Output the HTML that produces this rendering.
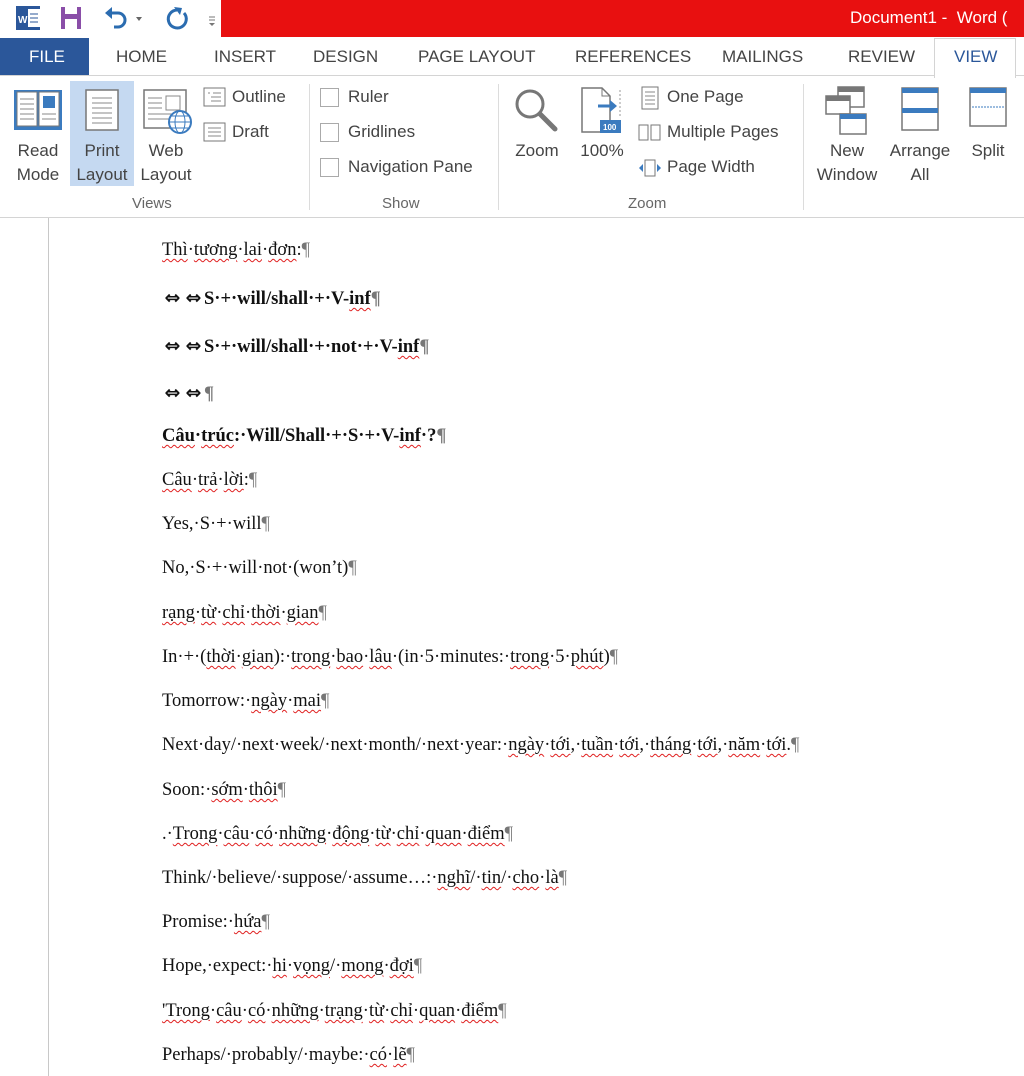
<!DOCTYPE html>
<html><head><meta charset="utf-8"><style>
*{margin:0;padding:0;box-sizing:border-box}
body{width:1024px;height:1076px;overflow:hidden;background:#fff;position:relative;font-family:"Segoe UI","Liberation Sans","DejaVu Sans",sans-serif;color:#444}
.a{position:absolute;white-space:nowrap}
.tab{position:absolute;top:47px;font-size:17px;color:#444}
.lbl{position:absolute;font-size:17px;color:#444;text-align:center;line-height:24px}
.grp{position:absolute;top:195px;font-size:15px;color:#666}
.sep{position:absolute;top:84px;width:1px;height:126px;background:#dcdcdc}
.cb{position:absolute;width:19px;height:19px;border:1px solid #aaa;background:#fff}
.doc{position:absolute;left:162px;font-family:"Liberation Serif","Noto Serif CJK SC",serif;font-size:18.5px;color:#111;white-space:nowrap}
.w{text-decoration:underline wavy #e02020;text-decoration-thickness:1px;text-underline-offset:3px}
.p{color:#777}
.ar{display:inline-block;width:21px;font-family:"DejaVu Sans",sans-serif;font-size:19px;font-weight:bold;text-align:center}
</style></head><body>
<!-- title bar -->
<div class="a" style="left:221px;top:0;width:803px;height:37px;background:#e81010"></div>
<div class="a" style="left:850px;top:8px;font-size:17px;color:#fff">Document1 -&nbsp; Word (</div>
<svg class="a" style="left:14px;top:5px" width="210" height="28">
<rect x="2" y="1" width="24" height="24" fill="#2b579a"/><rect x="14" y="4" width="12" height="18" fill="#fff"/><line x1="16" y1="9" x2="24" y2="9" stroke="#2b579a"/><line x1="16" y1="13" x2="24" y2="13" stroke="#2b579a"/><line x1="16" y1="17" x2="24" y2="17" stroke="#2b579a"/>
<text x="4" y="18" font-size="10" fill="#fff" font-family="Liberation Sans" font-weight="bold">W</text>
<rect x="47" y="2" width="20" height="22" fill="#8a4ea8"/><rect x="51" y="2" width="12" height="7" fill="#fff"/><rect x="51" y="14" width="12" height="10" fill="#fff"/>
<path d="M95 8 h9 a7 7 0 0 1 0 14 h-4" stroke="#2b6cb0" stroke-width="3" fill="none"/><path d="M91 8 l7 -6 v12z" fill="#2b6cb0"/>
<path d="M122 12 l6 0 l-3 4z" fill="#666"/>
<path d="M163 5 a9 9 0 1 0 7 3" stroke="#2b6cb0" stroke-width="3" fill="none"/><path d="M160 2 l8 1 l-2 7z" fill="#2b6cb0"/>
<line x1="195" y1="12" x2="201" y2="12" stroke="#777"/><line x1="195" y1="15" x2="201" y2="15" stroke="#777"/><path d="M195 18 h6 l-3 3z" fill="#777"/>
</svg>
<!-- tabs -->
<div class="a" style="left:0;top:38px;width:89px;height:38px;background:#2b579a"></div>
<div class="tab" style="left:29px;color:#fff">FILE</div>
<div class="tab" style="left:116px">HOME</div>
<div class="tab" style="left:214px">INSERT</div>
<div class="tab" style="left:313px">DESIGN</div>
<div class="tab" style="left:418px">PAGE LAYOUT</div>
<div class="tab" style="left:575px">REFERENCES</div>
<div class="tab" style="left:722px">MAILINGS</div>
<div class="tab" style="left:848px">REVIEW</div>
<div class="a" style="left:934px;top:38px;width:82px;height:40px;border:1px solid #d4d4d4;border-bottom:none;background:#fff"></div>
<div class="tab" style="left:954px;color:#2b579a">VIEW</div>
<div class="a" style="left:0;top:75px;width:934px;height:1px;background:#d4d4d4"></div>
<div class="a" style="left:1016px;top:75px;width:8px;height:1px;background:#d4d4d4"></div>
<!-- ribbon -->
<div class="a" style="left:0;top:217px;width:1024px;height:1px;background:#d4d4d4"></div>
<div class="a" style="left:70px;top:81px;width:64px;height:105px;background:#c5d9f1"></div>
<svg class="a" style="left:12px;top:88px" width="52" height="44"><rect x="2" y="2" width="48" height="40" fill="#3b7bbf"/><rect x="5" y="4" width="20" height="34" fill="#fff" stroke="#777"/><rect x="27" y="4" width="20" height="34" fill="#fff" stroke="#777"/><g stroke="#888"><line x1="8" y1="11" x2="22" y2="11"/><line x1="8" y1="16" x2="22" y2="16"/><line x1="8" y1="21" x2="22" y2="21"/><line x1="8" y1="26" x2="22" y2="26"/><line x1="8" y1="31" x2="22" y2="31"/><line x1="30" y1="26" x2="44" y2="26"/><line x1="30" y1="31" x2="44" y2="31"/></g><rect x="31" y="8" width="12" height="12" fill="#3b7bbf"/></svg>
<svg class="a" style="left:84px;top:88px" width="36" height="44"><rect x="2" y="2" width="32" height="40" fill="#fff" stroke="#777" stroke-width="1.5"/><g stroke="#888"><line x1="8" y1="10" x2="28" y2="10"/><line x1="8" y1="15" x2="28" y2="15"/><line x1="8" y1="20" x2="28" y2="20"/><line x1="8" y1="25" x2="28" y2="25"/><line x1="8" y1="30" x2="28" y2="30"/><line x1="8" y1="35" x2="28" y2="35"/></g></svg>
<svg class="a" style="left:142px;top:88px" width="52" height="48"><rect x="2" y="2" width="42" height="38" fill="#fff" stroke="#777" stroke-width="1.5"/><rect x="24" y="8" width="14" height="14" fill="none" stroke="#888"/><g stroke="#888"><line x1="6" y1="10" x2="20" y2="10"/><line x1="6" y1="15" x2="20" y2="15"/><line x1="6" y1="20" x2="20" y2="20"/><line x1="6" y1="26" x2="30" y2="26"/><line x1="6" y1="31" x2="30" y2="31"/></g><circle cx="38" cy="34" r="11" fill="#fff" stroke="#3b7bbf" stroke-width="2"/><g stroke="#3b7bbf" fill="none"><ellipse cx="38" cy="34" rx="5" ry="11"/><line x1="27" y1="34" x2="49" y2="34"/><line x1="29" y1="28" x2="47" y2="28"/><line x1="29" y1="40" x2="47" y2="40"/></g></svg>
<div class="lbl" style="left:10px;top:139px;width:56px">Read<br>Mode</div>
<div class="lbl" style="left:70px;top:139px;width:64px">Print<br>Layout</div>
<div class="lbl" style="left:136px;top:139px;width:60px">Web<br>Layout</div>
<svg class="a" style="left:203px;top:87px" width="24" height="60"><rect x="1" y="1" width="21" height="18" fill="#fff" stroke="#777"/><g stroke="#888"><line x1="5" y1="6" x2="7" y2="6"/><line x1="10" y1="6" x2="18" y2="6"/><line x1="8" y1="10" x2="18" y2="10"/><line x1="8" y1="14" x2="18" y2="14"/></g><rect x="1" y="36" width="21" height="18" fill="#fff" stroke="#777"/><g stroke="#888"><line x1="5" y1="41" x2="18" y2="41"/><line x1="5" y1="45" x2="18" y2="45"/><line x1="5" y1="49" x2="18" y2="49"/></g></svg>
<div class="a" style="left:232px;top:87px;font-size:17px">Outline</div>
<div class="a" style="left:232px;top:122px;font-size:17px">Draft</div>
<div class="grp" style="left:132px">Views</div>
<div class="sep" style="left:309px"></div>
<div class="cb" style="left:320px;top:88px"></div><div class="a" style="left:348px;top:87px;font-size:17px">Ruler</div>
<div class="cb" style="left:320px;top:123px"></div><div class="a" style="left:348px;top:122px;font-size:17px">Gridlines</div>
<div class="cb" style="left:320px;top:158px"></div><div class="a" style="left:348px;top:157px;font-size:17px">Navigation Pane</div>
<div class="grp" style="left:382px">Show</div>
<div class="sep" style="left:498px"></div>
<svg class="a" style="left:512px;top:86px" width="48" height="48"><circle cx="18" cy="18" r="13" fill="none" stroke="#777" stroke-width="3"/><line x1="28" y1="28" x2="43" y2="43" stroke="#777" stroke-width="5" stroke-linecap="round"/></svg>
<div class="lbl" style="left:510px;top:139px;width:54px">Zoom</div>
<svg class="a" style="left:580px;top:86px" width="44" height="50"><path d="M2 2 h20 l8 8 v36 h-28z" fill="#fff" stroke="#777" stroke-width="1.5"/><path d="M22 2 v8 h8" fill="none" stroke="#777"/><line x1="40" y1="4" x2="40" y2="30" stroke="#999" stroke-dasharray="2 2"/><line x1="18" y1="20" x2="32" y2="20" stroke="#3b7bbf" stroke-width="3"/><path d="M30 14 l7 6 l-7 6z" fill="#3b7bbf"/><rect x="20" y="34" width="21" height="13" fill="#3b7bbf"/><text x="23" y="44" font-size="8" fill="#fff" font-family="Liberation Sans" font-weight="bold">100</text></svg>
<div class="lbl" style="left:576px;top:139px;width:52px">100%</div>
<svg class="a" style="left:638px;top:86px" width="26" height="96"><rect x="4" y="1" width="16" height="22" fill="#fff" stroke="#777"/><g stroke="#888"><line x1="7" y1="6" x2="17" y2="6"/><line x1="7" y1="10" x2="17" y2="10"/><line x1="7" y1="14" x2="17" y2="14"/><line x1="7" y1="18" x2="17" y2="18"/></g><rect x="1" y="39" width="9" height="15" fill="#fff" stroke="#777"/><rect x="13" y="39" width="9" height="15" fill="#fff" stroke="#777"/><rect x="7" y="74" width="10" height="16" fill="#fff" stroke="#777"/><path d="M5 78 l-4 4 l4 4z M19 78 l4 4 l-4 4z" fill="#3b7bbf"/></svg>
<div class="a" style="left:667px;top:87px;font-size:17px">One Page</div>
<div class="a" style="left:667px;top:122px;font-size:17px">Multiple Pages</div>
<div class="a" style="left:667px;top:157px;font-size:17px">Page Width</div>
<div class="grp" style="left:628px">Zoom</div>
<div class="sep" style="left:803px"></div>
<svg class="a" style="left:824px;top:86px" width="46" height="50"><rect x="14" y="1" width="26" height="20" fill="#fff" stroke="#777" stroke-width="1.5"/><rect x="14" y="1" width="26" height="5" fill="#777"/><rect x="2" y="10" width="24" height="18" fill="#fff" stroke="#777" stroke-width="1.5"/><rect x="2" y="10" width="24" height="5" fill="#777"/><rect x="16" y="28" width="26" height="20" fill="#fff" stroke="#777" stroke-width="1.5"/><rect x="16" y="28" width="26" height="5" fill="#3b7bbf"/></svg>
<div class="lbl" style="left:810px;top:139px;width:74px">New<br>Window</div>
<svg class="a" style="left:900px;top:86px" width="40" height="48"><rect x="2" y="2" width="36" height="42" fill="#fff" stroke="#777" stroke-width="1.5"/><rect x="2" y="2" width="36" height="5" fill="#3b7bbf"/><rect x="2" y="22" width="36" height="5" fill="#3b7bbf"/></svg>
<div class="lbl" style="left:884px;top:139px;width:72px">Arrange<br>All</div>
<svg class="a" style="left:968px;top:86px" width="40" height="44"><rect x="2" y="2" width="36" height="38" fill="#fff" stroke="#777" stroke-width="1.5"/><rect x="2" y="2" width="36" height="5" fill="#3b7bbf"/><line x1="4" y1="21" x2="36" y2="21" stroke="#3b7bbf" stroke-dasharray="2 1"/></svg>
<div class="lbl" style="left:964px;top:139px;width:48px">Split</div>
<!-- document -->
<div class="a" style="left:48px;top:218px;width:1px;height:858px;background:#c8c8c8"></div>
<div class="doc" style="top:240px"><span class="w">Thì</span>·<span class="w">tương</span>·<span class="w">lai</span>·<span class="w">đơn</span>:<span class="p">¶</span></div>
<div class="doc" style="top:287px;font-weight:bold"><span class="ar">⇔</span><span class="ar">⇔</span>S·+·will/shall·+·V-<span class="w">inf</span><span class="p">¶</span></div>
<div class="doc" style="top:335px;font-weight:bold"><span class="ar">⇔</span><span class="ar">⇔</span>S·+·will/shall·+·not·+·V-<span class="w">inf</span><span class="p">¶</span></div>
<div class="doc" style="top:382px;font-weight:bold"><span class="ar">⇔</span><span class="ar">⇔</span><span class="p">¶</span></div>
<div class="doc" style="top:426px;font-weight:bold"><span class="w">Câu</span>·<span class="w">trúc</span>:·Will/Shall·+·S·+·V-<span class="w">inf</span>·?<span class="p">¶</span></div>
<div class="doc" style="top:470px"><span class="w">Câu</span>·<span class="w">trả</span>·<span class="w">lời</span>:<span class="p">¶</span></div>
<div class="doc" style="top:514px">Yes,·S·+·will<span class="p">¶</span></div>
<div class="doc" style="top:558px">No,·S·+·will·not·(won’t)<span class="p">¶</span></div>
<div class="doc" style="top:603px"><span class="w">rạng</span>·<span class="w">từ</span>·<span class="w">chỉ</span>·<span class="w">thời</span>·<span class="w">gian</span><span class="p">¶</span></div>
<div class="doc" style="top:647px">In·+·(<span class="w">thời</span>·<span class="w">gian</span>):·<span class="w">trong</span>·<span class="w">bao</span>·<span class="w">lâu</span>·(in·5·minutes:·<span class="w">trong</span>·5·<span class="w">phút</span>)<span class="p">¶</span></div>
<div class="doc" style="top:691px">Tomorrow:·<span class="w">ngày</span>·<span class="w">mai</span><span class="p">¶</span></div>
<div class="doc" style="top:735px">Next·day/·next·week/·next·month/·next·year:·<span class="w">ngày</span>·<span class="w">tới</span>,·<span class="w">tuần</span>·<span class="w">tới</span>,·<span class="w">tháng</span>·<span class="w">tới</span>,·<span class="w">năm</span>·<span class="w">tới</span>.<span class="p">¶</span></div>
<div class="doc" style="top:780px">Soon:·<span class="w">sớm</span>·<span class="w">thôi</span><span class="p">¶</span></div>
<div class="doc" style="top:824px">.·<span class="w">Trong</span>·<span class="w">câu</span>·<span class="w">có</span>·<span class="w">những</span>·<span class="w">động</span>·<span class="w">từ</span>·<span class="w">chỉ</span>·<span class="w">quan</span>·<span class="w">điểm</span><span class="p">¶</span></div>
<div class="doc" style="top:868px">Think/·believe/·suppose/·assume…:·<span class="w">nghĩ</span>/·<span class="w">tin</span>/·<span class="w">cho</span>·<span class="w">là</span><span class="p">¶</span></div>
<div class="doc" style="top:912px">Promise:·<span class="w">hứa</span><span class="p">¶</span></div>
<div class="doc" style="top:956px">Hope,·expect:·<span class="w">hi</span>·<span class="w">vọng</span>/·<span class="w">mong</span>·<span class="w">đợi</span><span class="p">¶</span></div>
<div class="doc" style="top:1001px"><span class="w">'Trong</span>·<span class="w">câu</span>·<span class="w">có</span>·<span class="w">những</span>·<span class="w">trạng</span>·<span class="w">từ</span>·<span class="w">chỉ</span>·<span class="w">quan</span>·<span class="w">điểm</span><span class="p">¶</span></div>
<div class="doc" style="top:1045px">Perhaps/·probably/·maybe:·<span class="w">có</span>·<span class="w">lẽ</span><span class="p">¶</span></div>
</body></html>
